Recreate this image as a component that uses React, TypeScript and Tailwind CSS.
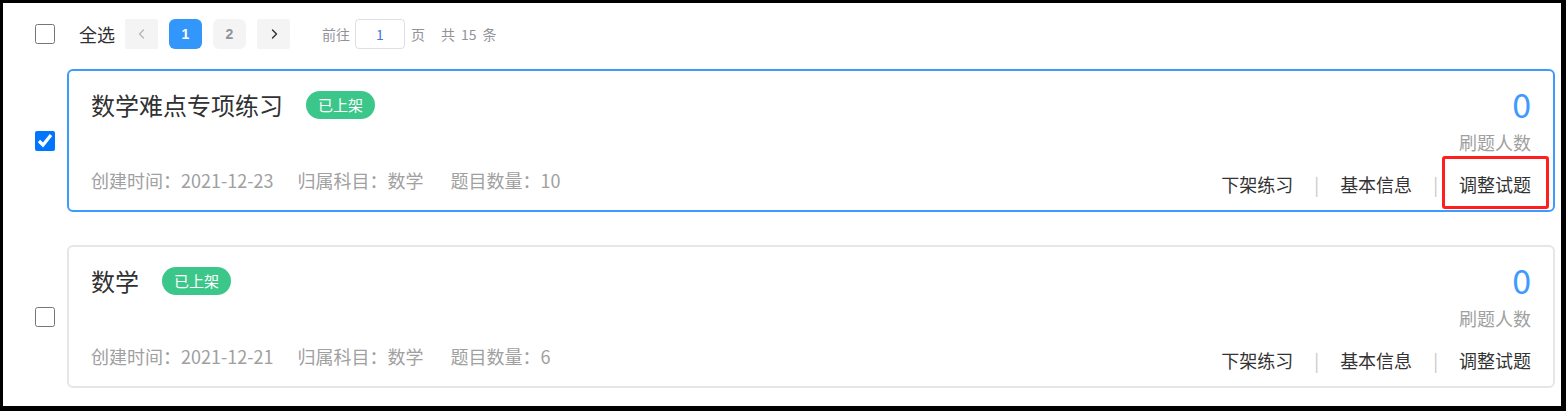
import React from "react";

const FONT = { fontFamily: '"Microsoft YaHei", "Noto Sans CJK SC", "Noto Sans", sans-serif' };

function Chevron({ dir, color }: { dir: "left" | "right"; color: string }) {
  return (
    <svg width="12" height="12" viewBox="0 0 12 12" fill="none">
      {dir === "left" ? (
        <polyline points="7.5,2 3.5,6 7.5,10" stroke={color} strokeWidth="1.4" strokeLinecap="round" strokeLinejoin="round" />
      ) : (
        <polyline points="4.5,2 8.5,6 4.5,10" stroke={color} strokeWidth="1.4" strokeLinecap="round" strokeLinejoin="round" />
      )}
    </svg>
  );
}

type Item = {
  title: string;
  date: string;
  subject: string;
  count: number;
  checked: boolean;
  active: boolean;
};

const items: Item[] = [
  { title: "数学难点专项练习", date: "2021-12-23", subject: "数学", count: 10, checked: true, active: true },
  { title: "数学", date: "2021-12-21", subject: "数学", count: 6, checked: false, active: false },
];

function Card({ item }: { item: Item }) {
  return (
    <div
      className={
        "flex-1 h-[143px] rounded-[6px] border-2 px-[22px] flex justify-between bg-white " +
        (item.active ? "border-[#3d9bff]" : "border-[#e6e6e6]")
      }
    >
      <div className="flex flex-col justify-between pt-[19px] pb-[18px]">
        <div className="flex items-center h-[30px]">
          <span className="text-[24px] leading-[30px] text-[#303133]">{item.title}</span>
          <span className="ml-[23px] h-[28px] px-[12px] rounded-full bg-[#3cc78a] text-white text-[15px] leading-[28px]">
            已上架
          </span>
        </div>
        <div className="flex text-[18px] leading-[24px] text-[#a0a0a0]">
          <span>创建时间：{item.date}</span>
          <span className="ml-[24px]">归属科目：{item.subject}</span>
          <span className="ml-[27px]">题目数量：{item.count}</span>
        </div>
      </div>
      <div className="flex flex-col items-end pt-[13px]">
        <div className="text-[34px] leading-[40px] text-[#3d9bff]">0</div>
        <div className="mt-[6px] text-[18px] leading-[24px] text-[#a0a0a0]">刷题人数</div>
        <div className="mt-[18px] flex items-center text-[18px] leading-[24px] text-[#333333]">
          <span>下架练习</span>
          <span className="px-[21px] text-[#c8c8c8]">|</span>
          <span>基本信息</span>
          <span className="px-[21px] text-[#c8c8c8]">|</span>
          <span className="relative">
            调整试题
            {item.active && (
              <span className="absolute -left-[17px] -right-[18px] -top-[16px] -bottom-[13px] border-[3px] border-[#ff1f1f] rounded-[3px]" />
            )}
          </span>
        </div>
      </div>
    </div>
  );
}

export default function App() {
  return (
    <div className="w-[1566px] h-[411px] bg-black pl-[3px] pt-[3px] pr-[5px] pb-[5px]" style={FONT}>
      <div className="w-full h-full bg-white pl-[32px] pr-[6px] pt-[16px]">
        <div className="flex items-center h-[30px]">
          <input type="checkbox" className="w-[20px] h-[20px] m-0" readOnly />
          <span className="ml-[24px] text-[18px] leading-[24px] text-[#303133]">全选</span>
          <div className="ml-[10px] flex items-center gap-[11px]">
            <div className="w-[33px] h-[30px] rounded-[2px] bg-[#f4f4f5] flex items-center justify-center">
              <Chevron dir="left" color="#b4b8c0" />
            </div>
            <div className="w-[33px] h-[30px] rounded-[6px] bg-[#3396fb] text-white font-bold text-[14px] flex items-center justify-center" style={{ fontFamily: '"Liberation Sans", Arial, sans-serif' }}>
              1
            </div>
            <div className="w-[33px] h-[30px] rounded-[6px] bg-[#f4f4f5] text-[#909399] font-bold text-[14px] flex items-center justify-center" style={{ fontFamily: '"Liberation Sans", Arial, sans-serif' }}>
              2
            </div>
            <div className="w-[33px] h-[30px] rounded-[2px] bg-[#f4f4f5] flex items-center justify-center">
              <Chevron dir="right" color="#303133" />
            </div>
          </div>
          <span className="ml-[32px] text-[14px] text-[#909399]">前往</span>
          <div className="ml-[5px] w-[50px] h-[30px] rounded-[4px] border border-[#dcdfe6] flex items-center justify-center text-[14px] text-[#4a74e0]">
            1
          </div>
          <span className="ml-[6px] text-[14px] text-[#909399]">页</span>
          <span className="ml-[16px] text-[14px] text-[#909399] flex">
            <span>共</span>
            <span className="ml-[6px]">15</span>
            <span className="ml-[6px]">条</span>
          </span>
        </div>
        <div className="mt-[20px] flex flex-col gap-[33px]">
          {items.map((it, i) => (
            <div key={i} className="flex items-center">
              <input
                type="checkbox"
                className="w-[20px] h-[20px] m-0 accent-[#0075ff]"
                checked={it.checked}
                readOnly
              />
              <div className="ml-[12px] flex-1 flex">
                <Card item={it} />
              </div>
            </div>
          ))}
        </div>
      </div>
    </div>
  );
}
